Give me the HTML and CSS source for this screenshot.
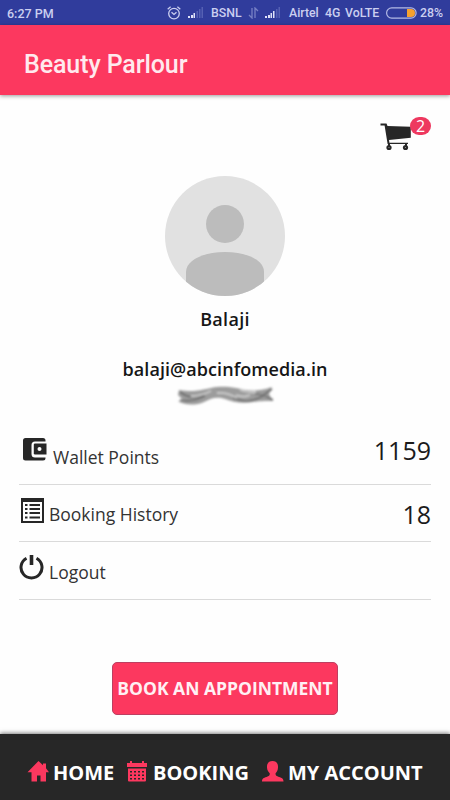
FILE: index.html
```html
<!DOCTYPE html>
<html lang="en">
<head>
<meta charset="utf-8">
<title>Beauty Parlour</title>
<link rel="stylesheet" href="styles.css">
</head>
<body>
<div class="statusbar">
  <span class="time">6:27 PM</span>
  <svg class="alarm" width="14" height="14" viewBox="0 0 14 14" fill="none" stroke="#cbcff0" stroke-width="1.3"><circle cx="7" cy="7.6" r="5.3"/><path d="M.7 3.2 3.600 .8M13.300 3.200 10.400 .8M4.500 6.300 7 8.400 9.500 6.300"/></svg>
  <svg class="signal-one" width="16" height="11" viewBox="0 0 16 11"><path fill="#dfe2f8" d="M0 9h2v2H0zM3 8h2v3H3zM5.500 6h1.500v5H5.500z"/><path fill="#5560b3" d="M8.500 4h1.500v7H8.500zM11 2h1.500v9H11zM13.500 0H15v11h-1.500z"/></svg>
  <span class="carrier-one">BSNL</span>
  <svg class="transfer" width="11" height="12" viewBox="0 0 11 12" fill="none" stroke="#7780c5" stroke-width="1.300"><path d="M4 1v10L1 8M7 11V1l3 3"/></svg>
  <svg class="signal-two" width="16" height="11" viewBox="0 0 16 11"><path fill="#dfe2f8" d="M0 9h2v2H0zM3 8h2v3H3zM5.500 6h1.500v5H5.500zM8 4h1.500v7H8z"/><path fill="#5560b3" d="M11 2h1.500v9H11zM13.500 0H15v11h-1.500z"/></svg>
  <span class="carrier-two">Airtel</span>
  <span class="network">4G</span>
  <span class="volte">VoLTE</span>
  <svg class="battery" width="31" height="12" viewBox="0 0 31 12"><rect x=".6" y=".9" width="29.500" height="10.200" rx="5.100" fill="none" stroke="#b3b9e5" stroke-width="1.200"/><path fill="#f6a12d" d="M21 2h4a4 4 0 0 1 0 8h-4z"/></svg>
  <span class="percent">28%</span>
</div>
<header class="appbar"><h1>Beauty Parlour</h1></header>
<main>
  <div class="cart">
    <svg width="31" height="28" viewBox="0 0 31 28"><path fill="#272727" d="M.5 .5h6l1 2.400 23.300.8v11L9 17l.4 2.700H28v1.300H7.600L4.600 2.500H.5z"/><path fill="#272727" d="M8 20h2v3H8zM25 20h2v3h-2z"/><circle cx="9" cy="24.500" r="2.600" fill="#272727"/><circle cx="25.500" cy="24.500" r="2.600" fill="#272727"/><circle cx="9" cy="24.500" r=".6" fill="#999"/><circle cx="25.500" cy="24.500" r=".6" fill="#999"/></svg>
    <span class="badge">2</span>
  </div>
  <section class="profile">
    <svg width="120" height="120" viewBox="0 0 120 120"><defs><clipPath id="disc"><circle cx="60" cy="60" r="60"/></clipPath></defs><g clip-path="url(#disc)"><path fill="#e1e1e1" d="M0 0h120v120H0z"/><circle cx="60" cy="48" r="19" fill="#bcbcbc"/><path fill="#bcbcbc" d="M21 120V96c0-12 18-20 39-20s39 8 39 20v24z"/></g></svg>
    <p class="name">Balaji</p>
    <p class="email">balaji@abcinfomedia.in</p>
    <svg class="smudge" width="100" height="22" viewBox="0 0 100 22"><defs><filter id="soft" x="-10%" y="-30%" width="120%" height="160%"><feGaussianBlur stdDeviation=".9"/></filter></defs><g filter="url(#soft)"><path fill="#9c9c9c" d="M4 5c14 2 18 1 32-2 10-2 17-1 25 0 9 2 19 5 36-1l-3 7 4 7c-9 0-14 0-20 1-12 2-20 0-28-3-9-3-15 0-21 3-9 4-21 3-26-1l5-1-5-5z"/><g fill="none" stroke="#6c6c6c" stroke-width="1.600"><path d="M5 7c8 6 14 6 24 3M5 15c12 2 18-1 25-4M58 13c12 5 20 3 28-1 4-3 7-5 11-8M80 9c8 0 13 3 18 6"/></g><path fill="none" stroke="#cdcdcd" stroke-width="1.800" d="M16 11c8 1 13-2 20-5M42 8c9-1 15 2 20 5M65 5c7 2 11 3 16 2M61 10c5 2 10 2 14 0"/></g></svg>
  </section>
  <ul class="menu">
    <li class="wallet">
      <svg width="25" height="24" viewBox="0 0 25 24"><path fill="#272727" d="M2.500 0H20q2.500 0 2.500 2.500V3.500H12q-3.500 0-3.500 3.500v9q0 3.500 3.500 3.500h10.500v.5Q22.500 22.500 20 22.500H2.500Q0 22.500 0 20v-17.500Q0 0 2.500 0z"/><path fill="#272727" d="M12 5.500h11.500v11H12q-1.200 0-1.200-1.200V6.700q0-1.200 1.200-1.200z"/><circle cx="16.500" cy="11" r="2" fill="#fff"/></svg>
      <span class="label">Wallet Points</span><span class="value">1159</span>
    </li>
    <li class="history">
      <svg width="23" height="25" viewBox="0 0 23 25"><path fill="#272727" fill-rule="evenodd" d="M0 0h23v25H0zM2 4v19h19V4z"/><path fill="#272727" d="M4 6h2.500v2H4zM8.500 6H19v2H8.500zM4 10h2.500v2H4zM8.500 10H19v2H8.500zM4 14h2.500v2H4zM8.500 14H19v2H8.500zM4 18.500h2.500v2H4zM8.500 18.500H19v2H8.500z"/></svg>
      <span class="label">Booking History</span><span class="value">18</span>
    </li>
    <li class="logout">
      <svg width="25" height="25" viewBox="0 0 25 25" fill="none" stroke="#272727"><path stroke-width="3" d="M7.500 3.200A10.500 10.500 0 1 0 17.500 3.200"/><path stroke-width="3.600" d="M12.500 0v10"/></svg>
      <span class="label">Logout</span>
    </li>
  </ul>
  <button class="book">BOOK AN APPOINTMENT</button>
</main>
<nav class="tabs">
  <a class="home"><svg width="22" height="21" viewBox="0 0 22 21"><path fill="#fc385f" d="M11.500 0l4.500 4.200V2.500h3v4.700l3 4h-3V20.500h-5.500V14.500h-3.500v6H4.500v-9.300H.5z"/></svg><span>HOME</span></a>
  <a class="booking"><svg width="20" height="21" viewBox="0 0 20 21"><path fill="#fc385f" fill-rule="evenodd" d="M0 2h3V0h2v2h10V0h2v2h3v4H0zM1 7.500h18v12q0 1-1 1H2q-1 0-1-1zM3 10v1.500h2V10zm4 0v1.500h2V10zm4 0v1.500h2V10zm4 0v1.500h2V10zM3 13.500V15h2v-1.500zm4 0V15h2v-1.500zm4 0V15h2v-1.500zm4 0V15h2v-1.500zM3 17v1.500h2V17zm4 0v1.500h2V17zm4 0v1.500h2V17zm4 0v1.500h2V17z"/></svg><span>BOOKING</span></a>
  <a class="account"><svg width="22" height="21" viewBox="0 0 22 21"><path fill="#fc385f" d="M10.500 0c4 0 5.700 2.600 5.500 6.500-.1 3-1.300 4.500-2.500 6 0 2 1 2.600 3.500 3.500 3 1 4.500 1.500 4.500 4.500H0c0-3 1.500-3.500 4.500-4.500 2.500-.9 3.300-1.500 3.300-3.500-1.200-1.500-2.700-3-2.800-6C4.800 2.600 6.500 0 10.500 0z"/></svg><span>MY ACCOUNT</span></a>
</nav>
</body>
</html>
```
FILE: styles.css
```css
* { box-sizing: border-box; }
body {
  margin: 0;
  width: 450px;
  height: 800px;
  display: flex;
  flex-direction: column;
  overflow: hidden;
  background: #fefefe;
  color: #1b1b1b;
  font-family: "Open Sans", sans-serif;
}
svg { display: block; flex: none; }
h1, p, ul { margin: 0; padding: 0; }
span { white-space: nowrap; }

.statusbar {
  flex: none;
  height: 25px;
  display: flex;
  align-items: center;
  padding-left: 7px;
  background: #303c9c;
  color: #cbcff0;
  font: 500 12.3px/23px Roboto, sans-serif;
}
.statusbar span { padding-top: 2px; }
.statusbar .time { width: 160px; padding-top: 1px; font-size: 12.5px; }
.alarm { margin-right: 7px; }
.signal-one { margin-right: 7px; }
.carrier-one { width: 37px; }
.transfer { margin-right: 6px; }
.signal-two { margin-right: 8px; }
.carrier-two { width: 36px; }
.network { width: 20px; }
.volte { width: 41px; }
.battery { margin-right: 3px; }

.appbar {
  flex: none;
  height: 70px;
  padding-left: 24px;
  background: #fc385f;
  box-shadow: 0 1px 4px rgba(0, 0, 0, .4);
}
.appbar h1 {
  color: #ffe9ee;
  font: 500 25px/80px Roboto, sans-serif;
  letter-spacing: -.1px;
}

main {
  flex: none;
  height: 639px;
  padding: 22px 19px 0;
  display: flex;
  flex-direction: column;
}
.cart { display: flex; align-self: flex-end; height: 59px; padding-top: 6px; }
.badge {
  width: 21px;
  height: 18px;
  margin-top: -6px;
  margin-left: -1px;
  border-radius: 9px;
  background: #ee385f;
  color: #fff;
  font-size: 16px;
  line-height: 18px;
  text-align: center;
}
.profile {
  height: 251px;
  display: flex;
  flex-direction: column;
  align-items: center;
  color: #161616;
  font-size: 18px;
  font-weight: 600;
}
.name { margin-top: 11px; line-height: 24px; letter-spacing: .3px; }
.email { margin-top: 26px; line-height: 24px; letter-spacing: .07px; }
.smudge { margin-top: 4px; }

.menu { list-style: none; }
.menu li {
  display: flex;
  align-items: flex-start;
  border-bottom: 1px solid #dadada;
}
.label { font-size: 17.5px; line-height: 24px; color: #333; }
.value { margin-left: auto; font-size: 25px; line-height: 34px; }
.wallet { height: 58px; padding: 7px 0 0 4px; }
.wallet svg { margin: 4px 6px 0 0; }
.wallet .label { margin-top: 11px; margin-left: -1px; }
.wallet .value { margin-top: -1px; }
.history { height: 57px; padding: 13px 0 0 2px; }
.history .label { margin: 4px 0 0 5px; }
.history .value { margin-top: -1px; }
.logout { height: 58px; padding-top: 13px; }
.logout .label { margin: 5px 0 0 5px; }

.book {
  align-self: center;
  width: 226px;
  height: 53px;
  margin-top: 62px;
  padding: 0 0 2px;
  border: 1px solid #bd3f61;
  border-radius: 5px;
  background: #fc385f;
  color: #fff0f4;
  font: 700 17.5px "Open Sans", sans-serif;
  white-space: nowrap;
}
.tabs {
  flex: 1;
  display: flex;
  padding: 27px 0 0 27px;
  background: #272727;
  box-shadow: 0 -1px 4px rgba(0, 0, 0, .5);
  color: #fff;
  font-size: 20px;
  font-weight: 700;
  line-height: 24px;
}
.tabs a { display: flex; }
.home { width: 100px; }
.booking { width: 135px; }
.home span { margin-left: 4px; }
.booking span { margin-left: 6px; }
.account span { margin-left: 4px; }
```
